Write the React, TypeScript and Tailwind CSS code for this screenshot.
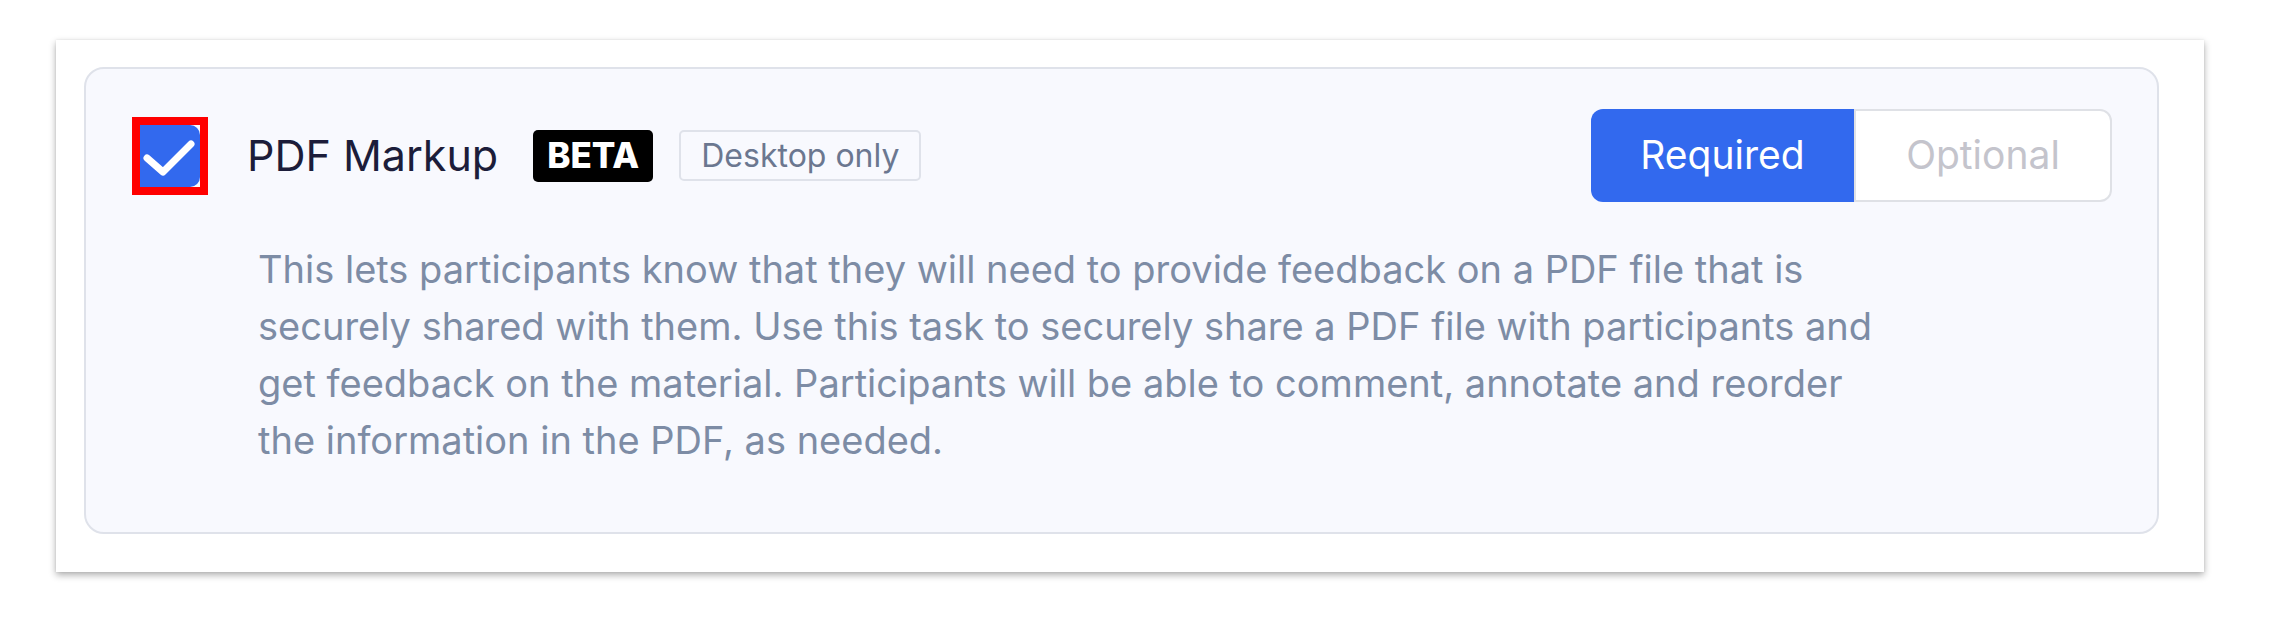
import React from 'react';

const font = { fontFamily: 'Inter, "Noto Sans", sans-serif' };

// 勾选框（带红色标注框）
function CheckBox() {
  return (
    <div className="w-[76px] h-[78px] border-8 border-[#ff0000] shrink-0">
      <div className="w-full h-full bg-[#3269ee] rounded-r-[10px]">
        <svg width="60" height="62" viewBox="0 0 60 62" fill="none">
          <polyline
            points="7,33 23,47 51,19"
            stroke="#ffffff"
            strokeWidth="7"
            strokeLinecap="round"
            strokeLinejoin="round"
          />
        </svg>
      </div>
    </div>
  );
}

export default function App() {
  return (
    <div className="min-h-[640px] bg-white pl-[56px] pt-[40px]" style={font}>
      <div className="w-[2148px] bg-white pl-[28px] pt-[27px] pr-[45px] pb-[38px] shadow-[0_3px_7px_rgba(0,0,0,0.32),0_0_2px_rgba(0,0,0,0.08)]">
        <div className="h-[467px] border-2 border-[#dfe2ea] bg-[#f8f9fe] rounded-[20px] pl-[46px] pr-[45px] pt-[40px]">
          {/* 标题行 */}
          <div className="flex items-center h-[93px]">
            <CheckBox />
            <span className="ml-[39px] text-[43px] leading-none text-[#1c1d3a]">PDF Markup</span>
            <span className="ml-[35px] h-[52px] px-[14px] flex items-center bg-black rounded-[5px] text-white text-[35px] font-extrabold leading-none">
              BETA
            </span>
            <span className="ml-[26px] h-[51px] px-[20px] flex items-center border-2 border-[#dfe2ea] rounded-[5px] text-[#6b7790] text-[32px] leading-none">
              Desktop only
            </span>
            <div className="ml-auto flex h-[93px]">
              <button className="w-[263px] h-full bg-[#3269ee] rounded-l-[12px] text-white text-[39px]">
                Required
              </button>
              <button className="w-[258px] h-full bg-white border-2 border-[#dfe1e6] rounded-r-[12px] text-[#c4c4cc] text-[39px]">
                Optional
              </button>
            </div>
          </div>

          {/* 描述 */}
          <p className="ml-[126px] mt-[39px] text-[38px] leading-[57px] text-[#7d8ca5]">
            This lets participants know that they will need to provide feedback on a PDF file that is
            <br />
            securely shared with them. Use this task to securely share a PDF file with participants and
            <br />
            get feedback on the material. Participants will be able to comment, annotate and reorder
            <br />
            the information in the PDF, as needed.
          </p>
        </div>
      </div>
    </div>
  );
}
